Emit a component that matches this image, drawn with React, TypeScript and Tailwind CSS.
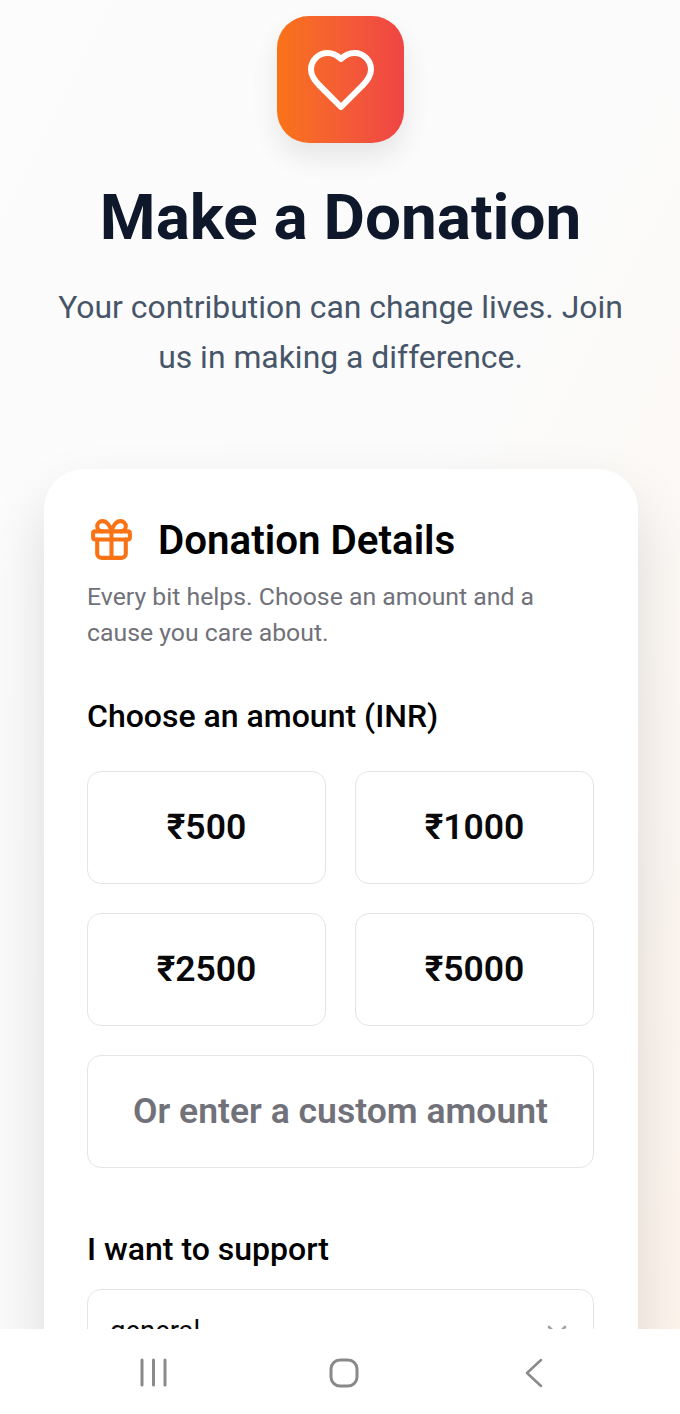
import React from "react";

const Amount = ({ v }: { v: string }) => (
  <button className="h-[113px] rounded-[14px] border border-[#e5e5e7] bg-white text-[35.5px] font-semibold text-[#09090b]">
    {v}
  </button>
);

export default function App() {
  return (
    <div className="flex h-[1414px] w-[680px] flex-col overflow-hidden bg-white font-['Roboto',sans-serif]">
      <main className="flex h-[1329px] flex-col items-center overflow-hidden bg-gradient-to-br from-[#fcfcfc] via-[#fbfbfb] to-[#fdf4ec] pr-[43px] pl-[44px] pt-[16px]">
        <div className="ml-[233px] flex h-[127px] w-[127px] shrink-0 items-center justify-center self-start rounded-[32px] bg-gradient-to-r from-[#f97316] to-[#ef4444] shadow-[0_14px_28px_rgba(0,0,0,0.09)]">
          <svg width="72" height="72" viewBox="0 0 24 24" fill="none" stroke="#ffffff" strokeWidth="2" strokeLinecap="round" strokeLinejoin="round">
            <path d="M19 14c1.490-1.460 3-3.210 3-5.500A5.500 5.500 0 0 0 16.500 3c-1.760 0-3 .5-4.500 2-1.500-1.500-2.740-2-4.500-2A5.500 5.500 0 0 0 2 8.500c0 2.300 1.500 4.050 3 5.500l7 7Z" />
          </svg>
        </div>
        <h1 className="mt-[37px] text-[63.8px] leading-[76px] font-bold text-[#0f172a]">Make a Donation</h1>
        <p className="mt-[26px] w-[580px] text-center text-[31.9px] leading-[50px] text-[#475569]">
          Your contribution can change lives. Join us in making a difference.
        </p>
        <section className="mt-[87px] w-[594px] shrink-0 self-start rounded-[40px] bg-white pt-[43px] pr-[44px] pb-[42px] pl-[43px] shadow-[0_30px_60px_rgba(0,0,0,0.13)]">
          <div className="flex items-start gap-[22px]">
            <svg className="mt-[2.5px]" width="49" height="49" viewBox="0 0 24 24" fill="none" stroke="#f97316" strokeWidth="2" strokeLinecap="round" strokeLinejoin="round">
              <rect x="3" y="8" width="18" height="4" rx="1" />
              <path d="M12 8v13" />
              <path d="M19 12v7a2 2 0 0 1-2 2H7a2 2 0 0 1-2-2v-7" />
              <path d="M7.500 8a2.500 2.500 0 0 1 0-5A4.800 8 0 0 1 12 8a4.800 8 0 0 1 4.500-5 2.500 2.500 0 0 1 0 5" />
            </svg>
            <h2 className="mt-[1px] text-[40.3px] leading-[56px] font-semibold text-black">Donation Details</h2>
          </div>
          <p className="mt-[10px] text-[24.8px] leading-[35.5px] text-[#71717a]">
            Every bit helps. Choose an amount and a cause you care about.
          </p>
          <h3 className="mt-[46px] text-[32px] leading-[40px] font-medium text-black">Choose an amount (INR)</h3>
          <div className="mt-[35px] grid grid-cols-2 gap-[29px]">
            <Amount v="₹500" />
            <Amount v="₹1000" />
            <Amount v="₹2500" />
            <Amount v="₹5000" />
          </div>
          <div className="mt-[29px] flex h-[113px] items-center justify-center rounded-[14px] border border-[#e5e5e7] bg-white text-[35.5px] font-semibold text-[#71717a]">
            Or enter a custom amount
          </div>
          <h3 className="mt-[61px] text-[32px] leading-[40px] font-medium text-black">I want to support</h3>
          <div className="mt-[20px] flex h-[84px] items-center justify-between rounded-t-[14px] border border-[#e5e5e7] bg-white pr-[20px] pl-[22px] text-[27.5px] text-[#09090b]">
            <span>general</span>
            <svg width="32" height="32" viewBox="0 0 24 24" fill="none" stroke="#9ca3af" strokeWidth="2" strokeLinecap="round" strokeLinejoin="round"><path d="m6 9 6 6 6-6" /></svg>
          </div>
        </section>
      </main>
      <nav className="flex h-[85px] items-start bg-white pt-[29px]">
        <svg className="ml-[138px]" width="32" height="30" viewBox="0 0 32 30" fill="none" stroke="#8a8a8a" strokeWidth="3" strokeLinecap="round">
          <path d="M4 2v25M15.500 2v25M27 2v25" />
        </svg>
        <svg className="ml-[158px]" width="32" height="32" viewBox="0 0 32 32" fill="none" stroke="#8a8a8a" strokeWidth="3">
          <rect x="3" y="2" width="26" height="26" rx="9" />
        </svg>
        <svg className="ml-[162px]" width="24" height="32" viewBox="0 0 24 32" fill="none" stroke="#8a8a8a" strokeWidth="2.500" strokeLinecap="round" strokeLinejoin="round">
          <path d="M19 2 5 15l14 13" />
        </svg>
      </nav>
    </div>
  );
}
